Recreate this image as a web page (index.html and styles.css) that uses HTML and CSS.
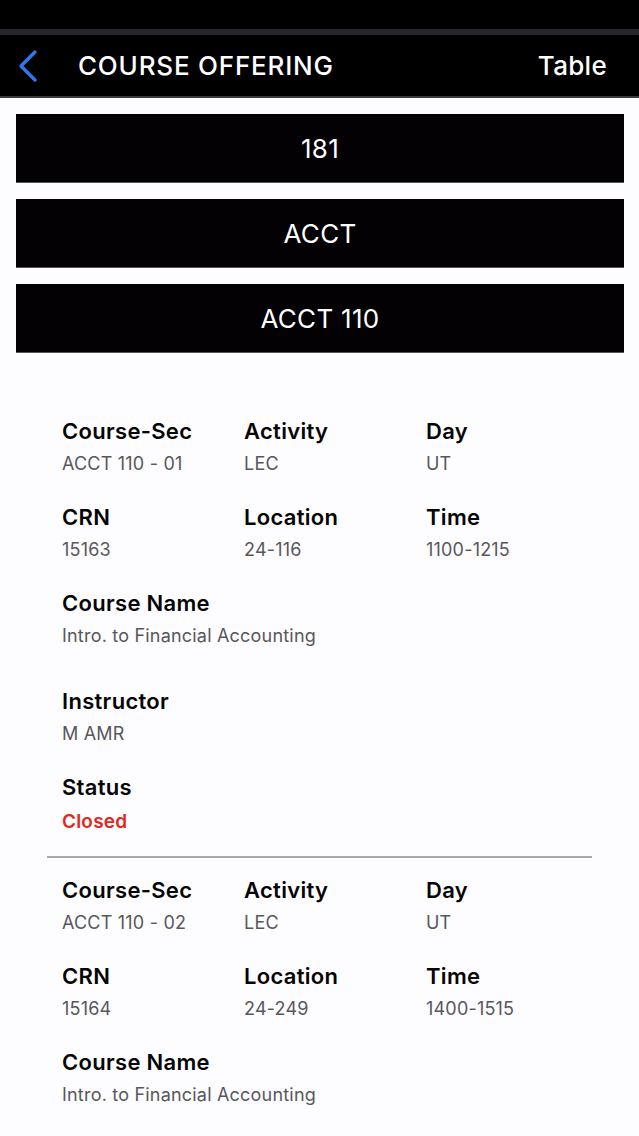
FILE: index.html
```html
<!DOCTYPE html>
<html>
<head>
<meta charset="utf-8">
<link rel="stylesheet" href="styles.css">
</head>
<body>
<div class="statusbar"></div>
<div class="statusline"></div>
<header class="nav">
  <svg class="back" width="24" height="34" viewBox="0 0 24 34"><path d="M19 3 L5 17 L19 31" fill="none" stroke="#2f78e8" stroke-width="3.4" stroke-linecap="round" stroke-linejoin="round"/></svg>
  <div class="title">COURSE OFFERING</div>
  <div class="action">Table</div>
</header>
<div class="buttons">
  <div class="btn">181</div>
  <div class="btn">ACCT</div>
  <div class="btn">ACCT 110</div>
</div>
<div class="list">
  <section class="offering">
    <div class="grid">
      <div class="field"><div class="label">Course-Sec</div><div class="value">ACCT 110 - 01</div></div>
      <div class="field"><div class="label">Activity</div><div class="value">LEC</div></div>
      <div class="field"><div class="label">Day</div><div class="value">UT</div></div>
      <div class="field"><div class="label">CRN</div><div class="value">15163</div></div>
      <div class="field"><div class="label">Location</div><div class="value">24-116</div></div>
      <div class="field"><div class="label">Time</div><div class="value">1100-1215</div></div>
      <div class="field wide name"><div class="label">Course Name</div><div class="value">Intro. to Financial Accounting</div></div>
      <div class="field wide"><div class="label">Instructor</div><div class="value">M AMR</div></div>
      <div class="field wide"><div class="label">Status</div><div class="value closed">Closed</div></div>
    </div>
  </section>
  <hr class="divider">
  <section class="offering second">
    <div class="grid">
      <div class="field"><div class="label">Course-Sec</div><div class="value">ACCT 110 - 02</div></div>
      <div class="field"><div class="label">Activity</div><div class="value">LEC</div></div>
      <div class="field"><div class="label">Day</div><div class="value">UT</div></div>
      <div class="field"><div class="label">CRN</div><div class="value">15164</div></div>
      <div class="field"><div class="label">Location</div><div class="value">24-249</div></div>
      <div class="field"><div class="label">Time</div><div class="value">1400-1515</div></div>
      <div class="field wide name"><div class="label">Course Name</div><div class="value">Intro. to Financial Accounting</div></div>
    </div>
  </section>
</div>
</body>
</html>
```
FILE: styles.css
```css
* { box-sizing: border-box; }
html, body { margin: 0; padding: 0; }
body {
  background: #fdfcfe;
  font-family: Inter, "Noto Sans", "Liberation Sans", sans-serif;
  width: 639px;
  height: 1136px;
  overflow: hidden;
}
.statusbar { height: 29px; background: #000; }
.statusline { height: 6px; background: #26292b; }
.nav {
  height: 63px;
  background: #000;
  border-bottom: 2px solid #3a3a3c;
  display: flex;
  align-items: center;
  color: #fff;
}
.back { margin-left: 16px; flex: none; }
.title {
  margin-left: 38px;
  font-size: 26px;
  font-weight: 500;
  letter-spacing: 0.8px;
  flex: 1;
}
.action {
  font-size: 26px;
  font-weight: 500;
  letter-spacing: 0.3px;
  margin-right: 32px;
}
.buttons {
  padding: 16px 15px 0 16px;
  display: flex;
  flex-direction: column;
  gap: 16px;
}
.btn {
  height: 69px;
  background: #030104;
  border-bottom: 1px solid #555;
  color: #fff;
  font-size: 26px;
  display: flex;
  align-items: center;
  justify-content: center;
  letter-spacing: 0.3px;
}
.list { padding: 0 47px; }
.offering { padding-left: 15px; }
.offering:first-child { padding-top: 64px; }
.grid {
  display: grid;
  grid-template-columns: 182px 182px 1fr;
  row-gap: 28px;
}
.field { display: flex; flex-direction: column; gap: 7px; }
.wide { grid-column: 1 / -1; }
.name { margin-bottom: 12px; }
.second .name { margin-bottom: 0; }
.label {
  font-size: 22px;
  line-height: 28px;
  font-weight: 600;
  letter-spacing: 0.3px;
  color: #050505;
}
.value {
  font-size: 18px;
  line-height: 22px;
  color: #58575c;
  letter-spacing: 0.2px;
  margin-top: 1px;
}
.value.closed {
  color: #e0281c;
  font-size: 19px;
  font-weight: 600;
  letter-spacing: 0.2px;
  margin-top: 3px;
}
.divider {
  margin: 23px 0 18px;
  border: 0;
  height: 2px;
  background: #a9a9ad;
}
```
